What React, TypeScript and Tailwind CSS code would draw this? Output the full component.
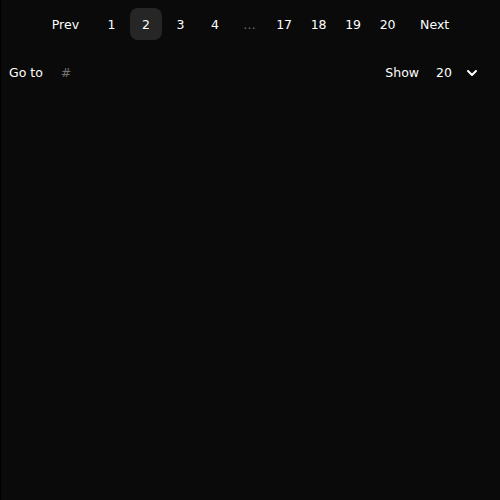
import { ChevronDown } from 'lucide-react';

const pages: (number | '…')[] = [1, 2, 3, 4, '…', 17, 18, 19, 20];

export default function App() {
  const current = 2;

  return (
    <div
      className="min-h-screen bg-[#0a0a0a] border-l border-black text-[12.5px] font-medium text-white"
      style={{ fontFamily: '"DejaVu Sans", sans-serif' }}
    >
      {/* Pager */}
      <nav className="flex items-center justify-center gap-[2.5px] pt-2">
        <button className="h-8 px-3.5 pt-0.5 rounded-lg">Prev</button>
        {pages.map((p, i) =>
          p === '…' ? (
            <span key={i} className="flex h-8 w-8 items-center justify-center pt-0.5 text-neutral-500">
              …
            </span>
          ) : (
            <button
              key={i}
              className={`flex h-8 w-8 items-center justify-center rounded-lg pt-0.5 ${
                p === current ? 'bg-[#262626]' : ''
              }`}
            >
              {p}
            </button>
          )
        )}
        <button className="h-8 px-3.5 pt-0.5 rounded-lg">Next</button>
      </nav>

      {/* Go to / page size */}
      <div className="mt-[17px] flex h-8 items-center justify-between pl-2 pr-5">
        <div className="flex items-center gap-2">
          <span>Go to</span>
          <input
            placeholder="#"
            className="w-12 bg-transparent px-2.5 outline-none placeholder:text-neutral-500"
          />
        </div>
        <div className="flex items-center">
          <span>Show</span>
          <span className="ml-[17px]">20</span>
          <ChevronDown className="ml-3 h-4 w-4" strokeWidth={3} />
        </div>
      </div>
    </div>
  );
}
